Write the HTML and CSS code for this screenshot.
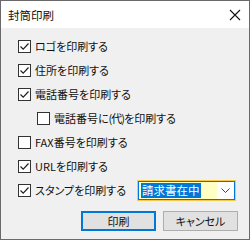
FILE: index.html
```html
<!DOCTYPE html>
<html lang="ja">
  <head>
    <meta charset="UTF-8">
    <meta name="viewport" content="width=device-width, initial-scale=1.0">
    <title>封筒印刷</title>
    <link rel="stylesheet" href="styles.css">
  </head>
  <body>
    <div class="window">
      <div class="titlebar">
        <span class="title">封筒印刷</span>
        <svg class="close" width="12" height="12" viewBox="0 0 12 12">
          <path d="M1 1 L11 11 M11 1 L1 11" stroke="#111" stroke-width="1.1" fill="none"/>
        </svg>
      </div>

      <div class="content">
        <label class="row">
          <span class="box checked"><svg width="11" height="11" viewBox="0 0 11 11"><path d="M1.5 5.5 L4.2 8.2 L9.5 2.5" stroke="#222" stroke-width="1.2" fill="none"/></svg></span>
          <span class="text">ロゴを印刷する</span>
        </label>
        <label class="row">
          <span class="box checked"><svg width="11" height="11" viewBox="0 0 11 11"><path d="M1.5 5.5 L4.2 8.2 L9.5 2.5" stroke="#222" stroke-width="1.2" fill="none"/></svg></span>
          <span class="text">住所を印刷する</span>
        </label>
        <label class="row">
          <span class="box checked"><svg width="11" height="11" viewBox="0 0 11 11"><path d="M1.5 5.5 L4.2 8.2 L9.5 2.5" stroke="#222" stroke-width="1.2" fill="none"/></svg></span>
          <span class="text">電話番号を印刷する</span>
        </label>
        <label class="row sub">
          <span class="box"></span>
          <span class="text">電話番号に<span class="paren">(代)</span>を印刷する</span>
        </label>
        <label class="row">
          <span class="box"></span>
          <span class="text">FAX番号を印刷する</span>
        </label>
        <label class="row">
          <span class="box checked"><svg width="11" height="11" viewBox="0 0 11 11"><path d="M1.5 5.5 L4.2 8.2 L9.5 2.5" stroke="#222" stroke-width="1.2" fill="none"/></svg></span>
          <span class="text">URLを印刷する</span>
        </label>
        <div class="row">
          <label class="row-label">
            <span class="box checked"><svg width="11" height="11" viewBox="0 0 11 11"><path d="M1.5 5.5 L4.2 8.2 L9.5 2.5" stroke="#222" stroke-width="1.2" fill="none"/></svg></span>
            <span class="text">スタンプを印刷する</span>
          </label>
          <div class="combo">
            <span class="combo-value"><span class="selected">請求書在中</span></span>
            <span class="combo-arrow">
              <svg width="9" height="5" viewBox="0 0 9 5"><path d="M0.5 0.5 L4.5 4.5 L8.5 0.5" stroke="#444" stroke-width="1" fill="none"/></svg>
            </span>
          </div>
        </div>

        <div class="buttons">
          <button class="btn default">印刷</button>
          <button class="btn">キャンセル</button>
        </div>
      </div>
    </div>
  </body>
</html>
```

FILE: styles.css
```css
body {
  margin: 0;
  font-family: "Noto Sans CJK JP", "Noto Sans", sans-serif;
  font-size: 11px;
  font-feature-settings: "palt";
  color: #111;
}

.window {
  width: 250px;
  height: 240px;
  box-sizing: border-box;
  border: 1px solid #6a6a6a;
  background-color: #f0f0f0;
  display: flex;
  flex-direction: column;
}

.titlebar {
  height: 27px;
  background-color: #fff;
  display: flex;
  align-items: center;
  justify-content: space-between;
  padding: 0 8px 0 7px;
}

.title {
  font-size: 11.5px;
}

.content {
  padding: 6px 0 0 17px;
  display: flex;
  flex-direction: column;
}

.row, .row-label {
  height: 24px;
  display: flex;
  align-items: center;
}

.row.sub {
  padding-left: 19px;
}

.paren {
  letter-spacing: -1px;
}

.box {
  width: 11px;
  height: 11px;
  border: 1px solid #333;
  background-color: #fff;
  margin-right: 4px;
  display: flex;
}

.combo {
  margin-left: 12px;
  width: 95px;
  height: 17px;
  border: 1px solid #0078d7;
  outline: 1px solid #f7c948;
  background-color: #fff;
  display: flex;
}

.combo-value {
  flex: 1;
  background-color: #ffffc4;
  padding: 1px 0 0 2px;
  box-sizing: border-box;
  font-size: 11.5px;
  line-height: 15px;
}

.selected {
  display: inline-block;
  background-color: #0078d7;
  color: #fff;
  padding: 0 1px;
  font-feature-settings: normal;
}

.combo-arrow {
  width: 17px;
  display: flex;
  align-items: center;
  justify-content: center;
}

.buttons {
  margin-top: 9px;
  padding-right: 11px;
  display: flex;
  justify-content: flex-end;
  gap: 7px;
}

.btn {
  width: 75px;
  height: 20px;
  font-family: inherit;
  font-size: 11px;
  font-feature-settings: "palt";
  background-color: #e1e1e1;
  border: 1px solid #adadad;
  padding: 0;
  color: #111;
}

.btn.default {
  border: 2px solid #0078d7;
}
```
